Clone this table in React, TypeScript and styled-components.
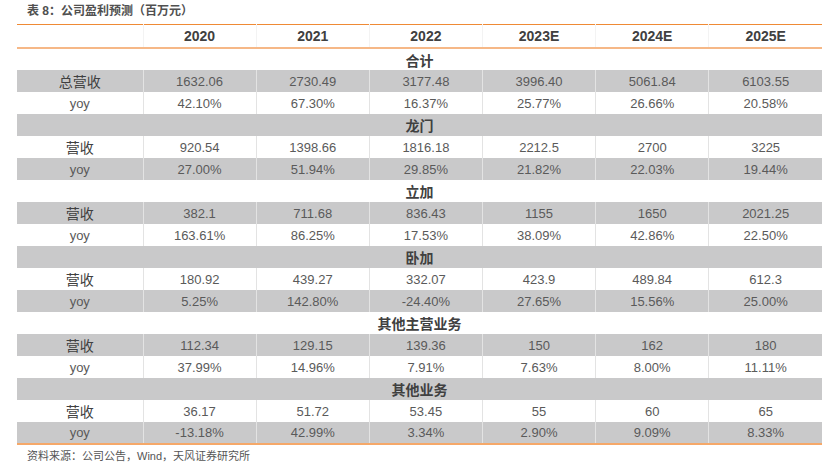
import styled, { createGlobalStyle } from "styled-components";

const GlobalStyle = createGlobalStyle`
  body {
    margin: 0;
    background: #ffffff;
    font-family: "Liberation Sans", "Noto Sans CJK SC", sans-serif;
  }
`;

type Section = {
  title: string;
  label: string;
  revenue: string[];
  yoy: string[];
};

const years = ["2020", "2021", "2022", "2023E", "2024E", "2025E"];

const sections: Section[] = [
  {
    title: "合计",
    label: "总营收",
    revenue: ["1632.06", "2730.49", "3177.48", "3996.40", "5061.84", "6103.55"],
    yoy: ["42.10%", "67.30%", "16.37%", "25.77%", "26.66%", "20.58%"],
  },
  {
    title: "龙门",
    label: "营收",
    revenue: ["920.54", "1398.66", "1816.18", "2212.5", "2700", "3225"],
    yoy: ["27.00%", "51.94%", "29.85%", "21.82%", "22.03%", "19.44%"],
  },
  {
    title: "立加",
    label: "营收",
    revenue: ["382.1", "711.68", "836.43", "1155", "1650", "2021.25"],
    yoy: ["163.61%", "86.25%", "17.53%", "38.09%", "42.86%", "22.50%"],
  },
  {
    title: "卧加",
    label: "营收",
    revenue: ["180.92", "439.27", "332.07", "423.9", "489.84", "612.3"],
    yoy: ["5.25%", "142.80%", "-24.40%", "27.65%", "15.56%", "25.00%"],
  },
  {
    title: "其他主营业务",
    label: "营收",
    revenue: ["112.34", "129.15", "139.36", "150", "162", "180"],
    yoy: ["37.99%", "14.96%", "7.91%", "7.63%", "8.00%", "11.11%"],
  },
  {
    title: "其他业务",
    label: "营收",
    revenue: ["36.17", "51.72", "53.45", "55", "60", "65"],
    yoy: ["-13.18%", "42.99%", "3.34%", "2.90%", "9.09%", "8.33%"],
  },
];

const App = () => {
  let rowIndex = 0;
  const nextShade = () => rowIndex++ % 2 === 1;

  return (
    <>
      <GlobalStyle />
      <Page>
        <Caption>表 8：公司盈利预测（百万元）</Caption>
        <Table>
          <colgroup>
            <col style={{ width: 126 }} />
            {years.map((y) => (
              <col key={y} />
            ))}
          </colgroup>
          <thead>
            <tr>
              <HeadCell />
              {years.map((y) => (
                <HeadCell key={y}>{y}</HeadCell>
              ))}
            </tr>
          </thead>
          <tbody>
            {sections.map((s) => (
              <SectionRows key={s.title} section={s} shades={[nextShade(), nextShade(), nextShade()]} />
            ))}
          </tbody>
        </Table>
        <Source>资料来源：公司公告，Wind，天风证券研究所</Source>
      </Page>
    </>
  );
};

export default App;

const SectionRows = ({ section, shades }: { section: Section; shades: boolean[] }) => (
  <>
    <Row $shaded={shades[0]}>
      <SectionCell colSpan={7}>{section.title}</SectionCell>
    </Row>
    <Row $shaded={shades[1]}>
      <LabelCell $cjk>{section.label}</LabelCell>
      {section.revenue.map((v, i) => (
        <DataCell key={i}>{v}</DataCell>
      ))}
    </Row>
    <Row $shaded={shades[2]}>
      <LabelCell>yoy</LabelCell>
      {section.yoy.map((v, i) => (
        <DataCell key={i}>{v}</DataCell>
      ))}
    </Row>
  </>
);

const Page = styled.div`
  width: 831px;
  height: 474px;
  padding-top: 4px;
  box-sizing: border-box;
`;

const Caption = styled.div`
  margin-left: 27px;
  height: 20px;
  line-height: 15px;
  font-size: 12px;
  font-weight: bold;
  color: #505050;
`;

const Table = styled.table`
  margin-left: 17px;
  width: 805px;
  border-collapse: collapse;
  table-layout: fixed;
  border-top: 1px solid #ef8a35;
  border-bottom: 2px solid #f5a869;
`;

const HeadCell = styled.th`
  height: 22px;
  padding: 0;
  font-size: 14px;
  font-weight: bold;
  color: #404040;
  text-align: center;
  border-bottom: 2px solid #f6b887;
  border-left: 1px solid #f3f3f3;
  &:first-child {
    border-left: none;
  }
`;

const Row = styled.tr<{ $shaded: boolean }>`
  height: 22px;
  background: ${(p) => (p.$shaded ? "#c9c9ca" : "#ffffff")};
`;

const SectionCell = styled.td`
  padding: 0;
  text-align: center;
  font-size: 14px;
  font-weight: bold;
  color: #404040;
`;

const LabelCell = styled.td<{ $cjk?: boolean }>`
  padding: 0;
  text-align: center;
  font-size: ${(p) => (p.$cjk ? "14px" : "13px")};
  color: ${(p) => (p.$cjk ? "#404040" : "#595959")};
`;

const DataCell = styled.td`
  padding: 0;
  text-align: center;
  font-size: 13px;
  color: #5a5a5a;
  border-left: 1px solid #e3e3e3;
`;

const Source = styled.div`
  margin-left: 27px;
  margin-top: 2px;
  font-size: 11px;
  color: #555555;
`;
